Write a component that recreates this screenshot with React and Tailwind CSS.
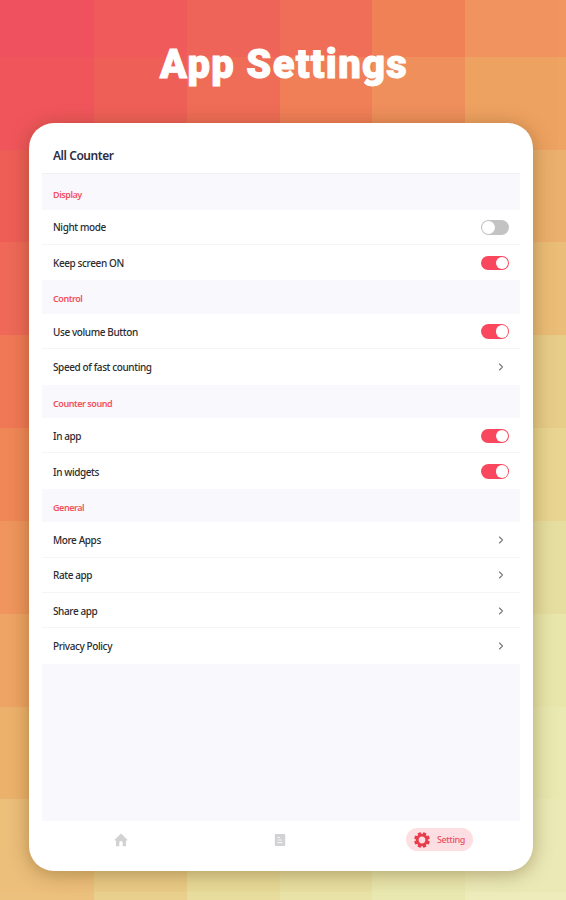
import { ChevronRight } from 'lucide-react';

const tiles = [
    ['#ef525e', '#f05a5b', '#ef6459', '#f06e57', '#f08055', '#f0935e', '#f0965e'],
    ['#f0555b', '#ee5f58', '#ef6c57', '#f07e57', '#ee8f5c', '#eea261', '#eea563'],
    ['#ee5d56', '#ef6a57', '#f07a57', '#f08858', '#ee9c62', '#ebaf6d', '#ebb06e'],
    ['#ef6858', '#f07a57', '#f08858', '#ee965e', '#ebaf6d', '#eabd77', '#eabe79'],
    ['#f17856', '#f08858', '#ee965e', '#eda465', '#eabd77', '#e6cc88', '#e6cd88'],
    ['#f08757', '#ee965e', '#eda465', '#ebb26d', '#e6cc88', '#e9d591', '#e9d592'],
    ['#ef955d', '#eda465', '#ebb26d', '#ebbe7b', '#e8d592', '#e6dea0', '#e6dea0'],
    ['#eea464', '#ebb26d', '#ebbe7b', '#e8cc88', '#e6dea0', '#e8e6ab', '#e8e6ab'],
    ['#ecb26c', '#ebbe7b', '#e8cc88', '#e8d592', '#e8e6ab', '#e9e8b1', '#ebe9b3'],
    ['#ecbf7b', '#e9cb87', '#e7da98', '#e7dfa1', '#e8e7ae', '#ebeab7', '#ebeab7'],
    ['#ecc17e', '#ead08d', '#e8dd9d', '#e9e3a8', '#eae8b1', '#edecba', '#edecba'],
];

const sections = [
    {
        title: 'Display',
        items: [
            { label: 'Night mode', type: 'switch', on: false },
            { label: 'Keep screen ON', type: 'switch', on: true },
        ],
    },
    {
        title: 'Control',
        items: [
            { label: 'Use volume Button', type: 'switch', on: true },
            { label: 'Speed of fast counting', type: 'link' },
        ],
    },
    {
        title: 'Counter sound',
        items: [
            { label: 'In app', type: 'switch', on: true },
            { label: 'In widgets', type: 'switch', on: true },
        ],
    },
    {
        title: 'General',
        items: [
            { label: 'More Apps', type: 'link' },
            { label: 'Rate app', type: 'link' },
            { label: 'Share app', type: 'link' },
            { label: 'Privacy Policy', type: 'link' },
        ],
    },
];

const Background = () => (
    <div className="absolute inset-0 grid grid-cols-[94px_93px_93px_92px_93px_93px_8px] grid-rows-[57px_93px_92px_93px_93px_93px_93px_93px_92px_93px_8px]">
        {tiles.flat().map((color, i) => (
            <div key={i} style={{ backgroundColor: color }} />
        ))}
    </div>
);

const Switch = ({ on }) => (
    <div className={`flex h-[14.5px] w-7 items-center rounded-full p-[1px] ${on ? 'justify-end bg-[#f9485e]' : 'justify-start bg-[#c3c3c3]'}`}>
        <div className="size-[12.5px] rounded-full bg-white" />
    </div>
);

const Row = ({ item }) => (
    <div className="flex h-[35.3px] items-center justify-between border-b border-[#f5f5f8] bg-white pt-px pr-[11px] pl-[11px] last:border-b-0">
        <span className="pt-px text-[10px] font-medium tracking-[-0.4px] text-[#2c2c30]">{item.label}</span>
        {item.type === 'switch' ? (
            <Switch on={item.on} />
        ) : (
            <ChevronRight size={12} strokeWidth={2.2} className="mr-[2px] text-[#777]" />
        )}
    </div>
);

const HomeIcon = () => (
    <svg viewBox="0 0 14 14" className="h-[14px] w-[14px]" fill="#d2d2d4">
        <path d="M7 .5 13.2 6.4V7.6H12V13.2H8.7V9.6a1.7 1.7 0 0 0-3.4 0v3.6H2V7.6H.8V6.4Z" />
    </svg>
);

const ListIcon = () => (
    <svg viewBox="0 0 12 14" className="h-[14px] w-3" fill="none">
        <rect x=".8" y="1" width="10.4" height="12" rx="1.2" fill="#d2d2d4" />
        <path d="M3.5 4.5H6M3.5 7H8M3.5 9.7H8.5" stroke="#f4f4f5" strokeWidth="1.2" />
    </svg>
);

const GearIcon = () => (
    <svg viewBox="-8 -8 16 16" className="size-4" fill="#e93c4c">
        {[0, 45, 90, 135, 180, 225, 270, 315].map(a => (
            <rect key={a} x="-1.7" y="-7.9" width="3.4" height="3.4" rx=".5" transform={`rotate(${a + 22.5})`} />
        ))}
        <circle r="4.8" fill="none" stroke="#e93c4c" strokeWidth="2.8" />
    </svg>
);

const App = () => {
    return (
        <div className="relative flex h-[900px] w-[566px] flex-col overflow-hidden font-['Noto_Sans',sans-serif]">
            <Background />

            <h1 className="relative h-[122.5px] pt-[41px] pl-[2px] text-center font-[Roboto,sans-serif] text-[40px] leading-[48px] font-black tracking-[1.3px] text-white [-webkit-text-stroke:0.9px_white]">
                App Settings
            </h1>

            <div className="relative ml-[29px] flex h-[748.5px] w-[504px] flex-col rounded-[25px] bg-white px-[13px] shadow-[0_3px_20px_rgba(90,60,10,0.4)]">
                <header className="flex h-[50.5px] items-end pb-[7.5px] pl-[11px]">
                    <span className="text-[12px] leading-5 font-semibold tracking-[-0.45px] text-[#2c2c44]">All Counter</span>
                </header>

                <main className="flex-1 border-t border-[#f1f1f5] bg-[#f8f8fd]">
                    {sections.map((section, i) => (
                        <section key={section.title}>
                            <h2 className={`flex items-center pl-[11px] text-[9px] font-semibold tracking-[-0.45px] text-[#f4505f] ${i === 0 ? 'h-[35.8px] pt-[6px]' : 'h-[33.6px] pt-[4px]'}`}>
                                {section.title}
                            </h2>
                            {section.items.map(item => (
                                <Row key={item.label} item={item} />
                            ))}
                        </section>
                    ))}
                </main>

                <nav className="flex h-[50px] items-start pt-[7px]">
                    <div className="flex h-6 w-[158px] items-center justify-center">
                        <HomeIcon />
                    </div>
                    <div className="flex h-6 w-[159px] items-center justify-center">
                        <ListIcon />
                    </div>
                    <div className="ml-[47px] flex h-[23px] w-[67px] items-center gap-[7px] rounded-full bg-[#fddfe3] pl-2">
                        <GearIcon />
                        <span className="pt-px text-[9px] font-medium tracking-[-0.4px] text-[#e85062]">Setting</span>
                    </div>
                </nav>
            </div>
        </div>
    );
};

export default App;
